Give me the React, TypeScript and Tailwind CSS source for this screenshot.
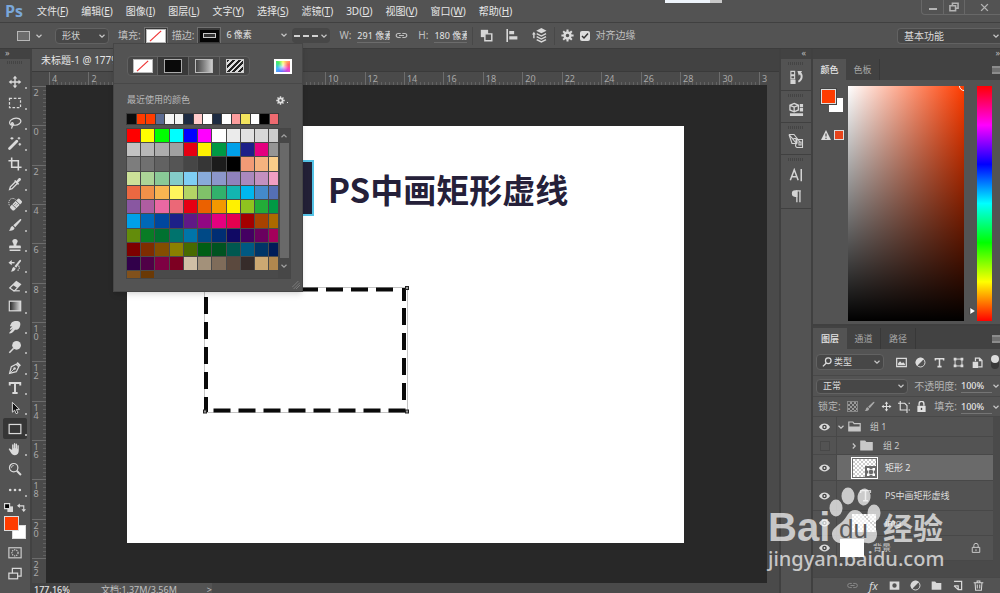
import { ReactNode } from "react";

const menus: [string, string][] = [
  ["文件", "F"],
  ["编辑", "E"],
  ["图像", "I"],
  ["图层", "L"],
  ["文字", "Y"],
  ["选择", "S"],
  ["滤镜", "T"],
  ["3D", "D"],
  ["视图", "V"],
  ["窗口", "W"],
  ["帮助", "H"],
];

const recentColors = [
  "#0c0c0c", "#ff3c00", "#ff3c00", "#5c6b92", "#f4f4f4", "#f2f2f2", "#1d2b42", "#ffcbcb",
  "#ffffff", "#1d2b42", "#ffffff", "#fb9c9c", "#f3e45d", "#ffffff", "#000000", "#ee6a70",
];

const swatches = [
  "#ff0000", "#ffff00", "#00ff00", "#00ffff", "#0000ff", "#ff00ff", "#ffffff", "#ebebeb", "#e1e1e1", "#d7d7d7", "#cccccc",
  "#c2c2c2", "#b7b7b7", "#acacac", "#a0a0a0", "#e60012", "#fff100", "#009944", "#00a0e9", "#1d2088", "#e4007f", "#959595",
  "#7d7d7d", "#707070", "#626262", "#555555", "#464646", "#363636", "#1c1c1c", "#000000", "#f29b76", "#f6b37f", "#facd89",
  "#cce198", "#acd598", "#89c997", "#84ccc9", "#7ecef4", "#88abda", "#8c97cb", "#8f82bc", "#aa89bd", "#c490bf", "#f19ec2",
  "#eb6841", "#f19149", "#f8b551", "#fff45c", "#b3d465", "#80c269", "#32b16c", "#13b5b1", "#00b7ee", "#448aca", "#556fb5",
  "#8957a1", "#ae5da1", "#ea68a2", "#eb6877", "#e60012", "#eb6100", "#f39800", "#fff100", "#8fc31f", "#22ac38", "#009944",
  "#00a0e9", "#0068b7", "#00479d", "#1d2088", "#601986", "#920783", "#e4007f", "#e5004f", "#a40000", "#a84200", "#ac6a00",
  "#638c0b", "#097c25", "#007130", "#00736d", "#0075a9", "#004986", "#002e73", "#100964", "#440062", "#6a005f", "#a4005b",
  "#7d0000", "#7f2d00", "#834e00", "#8a8000", "#486a00", "#005e15", "#005321", "#005850", "#005982", "#003567", "#001c58",
  "#31004a", "#500047", "#7e0043", "#7d0022", "#d0bfa5", "#a3917a", "#7f6c5a", "#5b493e", "#362c2a", "#cca872", "#b1874e",
  "#81511c", "#6a3906",
];

const topMarks = [4, 2, 0, 2, 4, 6, 8, 10, 12, 14, 16, 18, 20, 22, 24, 26, 28, 30];
const sideMarks = ["2", "0", "2", "4", "6", "8", "10", "12", "14", "16", "18", "20"];

function Icon({ children, size = "size-4", label }: { children: ReactNode; size?: string; label?: string }) {
  return (
    <svg
      viewBox="0 0 16 16"
      className={`${size} shrink-0`}
      fill="none"
      stroke="currentColor"
      strokeWidth="1.4"
      aria-label={label}
      aria-hidden={label ? undefined : true}
    >
      {children}
    </svg>
  );
}

function Chevron() {
  return (
    <svg viewBox="0 0 8 8" className="size-2 shrink-0 pointer-events-none" fill="none" stroke="#c8c8c8" strokeWidth="1.2" aria-hidden>
      <path d="M1.5 2.8 4 5.2 6.5 2.8" />
    </svg>
  );
}

function Burger() {
  return <span className="h-2 w-3 shrink-0 border-y-2 border-[#8c8c8c] bg-[#707070]" />;
}

function Grip() {
  return <span className="h-[3px] w-4 bg-[repeating-linear-gradient(90deg,#444_0_1px,transparent_1px_2px)]" />;
}

const solid = { fill: "currentColor", stroke: "none" };

const tools: { name: string; icon: ReactNode; active?: boolean; single?: boolean }[] = [
  {
    name: "移动工具",
    icon: (
      <>
        <path d="M8 3v10M3 8h10" strokeWidth="1.6" />
        <path {...solid} d="M8 .8 10.6 4H5.4zM8 15.2 5.4 12h5.2zM.8 8 4 5.4v5.2zM15.2 8 12 10.6V5.4z" />
      </>
    ),
  },
  { name: "矩形选框工具", icon: <rect x="1.7" y="2.7" width="12.6" height="10.6" strokeDasharray="3 1.9" /> },
  {
    name: "套索工具",
    icon: (
      <path d="M4.5 10.8C1.5 10 .8 6.8 3.6 4.4 6.5 2 12.5 1.5 14.3 4.5c1.7 3.2-2.8 6.5-7.3 6-2-.2-3.5-1.7-2.8-2.7.9-1.1 2.6 1 1.6 2.9-.6 1.3-1.9 1.3-1.5 3.8" />
    ),
  },
  {
    name: "魔棒工具",
    icon: (
      <>
        <path d="M1.8 14.2 10 6" strokeWidth="3.2" strokeLinecap="round" />
        <path d="M4.5 1v3.4M2.8 2.7h3.4M12.5 1v3M11 2.5h3M13.5 8v3M12 9.5h3" strokeWidth="1.2" />
      </>
    ),
  },
  { name: "裁剪工具", icon: <path d="M4.2.5v11.3h11.3M.5 4.2h11.3v11.3" strokeWidth="1.8" /> },
  {
    name: "吸管工具",
    icon: (
      <>
        <path d="M8.5 5.5 2.7 11.3 1.8 14.2l2.9-.9 5.8-5.8" strokeWidth="1.5" />
        <path {...solid} d="m7 4.5 1.2-1.2 1.5 1.2L12 1.7C13.6 0 16 2.4 14.3 4l-2.8 2.3 1.2 1.5L11.5 9z" />
      </>
    ),
  },
  {
    name: "污点修复画笔工具",
    icon: (
      <>
        <g transform="rotate(-45 9 8.5)">
          <rect {...solid} x="1.5" y="5.5" width="15" height="6.4" rx="2" />
          <path d="M6 5v7.500M12 5v7.500" stroke="#535353" strokeWidth=".9" />
          <path d="M7.300 7.500h3.500M7.300 9.700h3.500" stroke="#535353" strokeWidth=".9" strokeDasharray="1 1" />
        </g>
        <path d="M1.500 9.500C.2 6 1.200 2.300 4.500 1.700c1.800-.3 3 .3 4 1.200" strokeWidth="1" strokeDasharray="1.500 1" />
      </>
    ),
  },
  {
    name: "画笔工具",
    icon: (
      <path {...solid} d="M14.8 1.2c.9.7.2 1.5-.3 2.2L8.3 10.5 6 8.3l7-6.4c.6-.6 1.1-1.2 1.8-.7zM5.2 9l2.3 2.3C7 14 4 15 1 14.2c1.6-.7 1.5-1.8 1.9-3C3.3 10 4 9.2 5.2 9z" />
    ),
  },
  {
    name: "仿制图章工具",
    icon: (
      <path {...solid} d="M8 1c1.9 0 3.1 1.3 3.1 2.8C11.1 5.2 9.5 6 9.5 8.5h4c.8 0 1.2.5 1.2 1.2v2.1H1.3V9.7c0-.7.5-1.2 1.2-1.2h4C6.5 6 4.9 5.2 4.9 3.8 4.9 2.3 6.1 1 8 1zM1.8 13h12.4v1.8H1.8z" />
    ),
  },
  {
    name: "历史记录画笔工具",
    icon: (
      <>
        <path {...solid} d="M14.5 1c.9.6.3 1.5-.2 2.2l-4.9 6.8-2-1.7 5.4-6.5c.5-.6 1-1.3 1.7-.8zM6.7 9l2 1.7C8.5 13.5 6 14.8 3 14.2c1.3-.8 1.3-1.7 1.7-2.8.3-1.2 1-2.2 2-2.4zM.5 4.2 4.3 1v6z" />
        <path d="M3.5 4.2h4" strokeWidth="1.6" />
        <path d="M12 7.5c1.8 2 .8 4.5-1.5 6" strokeDasharray="1.5 1" />
      </>
    ),
  },
  {
    name: "橡皮擦工具",
    icon: (
      <>
        <path d="M6.5 13.3 2 10.3 9.5 3l4.8 3.2-6.7 7.1z" />
        <path {...solid} d="M5.5 6.8 10.4 10l3.9-3.8L9.5 3z" />
        <path d="M6 13.5h7.5" />
      </>
    ),
  },
  {
    name: "渐变工具",
    icon: (
      <>
        <defs>
          <linearGradient id="toolGrad">
            <stop stopColor="#222" />
            <stop offset="1" stopColor="#ddd" />
          </linearGradient>
        </defs>
        <rect x="1.5" y="2.5" width="13" height="11" fill="url(#toolGrad)" />
      </>
    ),
  },
  {
    name: "涂抹工具",
    icon: (
      <path {...solid} d="M4 3c1.5-2 7.5-2.5 9.3-.8 1.2 1.3 1 4 0 6C12 10.7 10 11.5 8 11c-1 1.5-3 3.7-5.8 4.3-.8.1-1-.6-.5-1.1L6 9.2 3.3 11c-.9.4-1.5-.5-.9-1.2L5 7 3.2 7.5c-1 0-1.2-1-.5-1.7z" />
    ),
  },
  {
    name: "减淡工具",
    icon: (
      <>
        <circle {...solid} cx="9.8" cy="6" r="5" />
        <path d="M6.5 9.5 1.5 14.6" strokeWidth="1.8" />
      </>
    ),
  },
  {
    name: "钢笔工具",
    icon: (
      <>
        <path d="m1.8 14.2 2-7.7L9.3 3.7l3 3-2.8 5.5z" />
        <path d="M1.8 14.2 7 9" strokeWidth="1" />
        <circle {...solid} cx="7.5" cy="8.5" r="1.4" />
        <path {...solid} d="m9.5 2.8 1.6-1.6 3.7 3.7-1.6 1.6z" />
      </>
    ),
  },
  { name: "横排文字工具", icon: <path d="M2 5V2.3h12V5M8 2.3v11.4M5 13.8h6" strokeWidth="2.2" /> },
  {
    name: "路径选择工具",
    icon: <path d="M5 1.5v11.3l2.6-2.4 1.7 4.1 2-.9-1.7-4h3.6z" fill="#111" strokeWidth="1.1" />,
  },
  { name: "矩形工具", icon: <rect x="1.3" y="2.8" width="13.4" height="10.4" />, active: true },
  {
    name: "抓手工具",
    icon: (
      <path {...solid} d="M4.7 9V3.6c0-1.4 1.6-1.4 1.6 0V7h.4V2.2c0-1.5 1.7-1.5 1.7 0V7h.4V2.8c0-1.4 1.6-1.4 1.6 0V7.6h.4V4.5c0-1.3 1.5-1.3 1.5 0v5.2c0 3-1.3 5.3-4.3 5.3-2.4 0-3.6-1-4.6-2.8L1 8.7c-.5-1 .7-1.7 1.5-.9z" />
    ),
  },
  {
    name: "缩放工具",
    single: true,
    icon: (
      <>
        <circle cx="6.5" cy="6.5" r="4.8" />
        <path d="M4 6.5C4 5 5 4 6.5 4" strokeWidth="1" />
        <path d="m10 10 4.8 4.8" strokeWidth="2.2" />
      </>
    ),
  },
  {
    name: "编辑工具栏",
    icon: (
      <g {...solid}>
        <circle cx="2.5" cy="8" r="1.5" />
        <circle cx="8" cy="8" r="1.5" />
        <circle cx="13.5" cy="8" r="1.5" />
      </g>
    ),
  },
];

function GearIcon({ size }: { size: string }) {
  return (
    <Icon size={size}>
      <circle cx="8" cy="8" r="3.7" strokeWidth="3" />
      <path
        d="M8 .5v3M8 12.5v3M.5 8h3M12.5 8h3M2.7 2.7l2.1 2.1M11.2 11.2l2.1 2.1M13.3 2.7l-2.1 2.1M4.8 11.2l-2.1 2.1"
        strokeWidth="2.5"
      />
    </Icon>
  );
}

function FolderIcon({ open }: { open?: boolean }) {
  return (
    <Icon size="size-[13px]">
      <path d="M1 13.5v-11h5l1.5 2H15v9z" fill={open ? "none" : "currentColor"} />
      {open && <path {...solid} d="M1 8h14v5.5H1z" />}
    </Icon>
  );
}

function NoFill() {
  return (
    <svg viewBox="0 0 20 14" className="h-[14px] w-5 border border-[#bbb] bg-white" aria-hidden>
      <path d="M3 13 16 1" stroke="#e33" strokeWidth="1.4" />
    </svg>
  );
}

function MenuBar() {
  return (
    <header className="relative flex h-[23px] shrink-0 items-center border-b border-[#404040] bg-[#535353]">
      <span className="w-[30px] pl-[5px] font-[Open_Sans] text-[16px] leading-[22px] font-bold text-[#7aa7d9]">Ps</span>
      <nav className="ml-[7px] flex gap-[13px]">
        {menus.map(([name, key]) => (
          <button key={name} className="flex items-center text-[10px] whitespace-nowrap text-[#e6e6e6]">
            {name}(<u>{key}</u>)
          </button>
        ))}
      </nav>
      <div className="absolute top-0 left-[665px] flex h-[3px] w-[57px] justify-end bg-[#eef4fb]">
        <span className="w-3 bg-[#c8c8c8]" />
      </div>
      <div className="ml-auto flex h-[15px] self-start rounded-bl-sm border-b border-l border-[#686868] text-[#b4b4b4]">
        <button aria-label="最小化" className="flex w-[22px] items-center justify-center border-r border-[#686868] pt-1">
          <span className="h-[2px] w-2 bg-[#b4b4b4]" />
        </button>
        <button aria-label="还原" className="flex w-[21px] items-center justify-center border-r border-[#686868]">
          <Icon size="size-[10px]">
            <path d="M5.5 5V2h9v8h-3M1.5 6h9v8h-9z" strokeWidth="2.5" />
          </Icon>
        </button>
        <button aria-label="关闭" className="flex w-[35px] items-center justify-center pl-1">
          <Icon size="size-[9px]">
            <path d="m2 2 12 12M14 2 2 14" strokeWidth="2.5" />
          </Icon>
        </button>
      </div>
    </header>
  );
}

function FillPopover() {
  return (
    <div className="absolute top-[20px] left-[113px] z-20 w-[190px] border border-[#464646] bg-[#535353] pb-3 shadow-md">
      <div className="flex items-center justify-between border-b border-[#484848] px-[13px] pt-[12px] pb-[7px]">
        <div className="flex h-[20px] divide-x divide-[#616161] rounded-sm border border-[#616161] bg-[#474747]">
          <button aria-label="无颜色" className="flex w-[30px] items-center justify-center">
            <NoFill />
          </button>
          <button aria-label="纯色" className="flex w-[31px] items-center justify-center bg-[#383838]">
            <span className="h-[14px] w-[18px] border border-[#aaa] bg-[#0a0a0a]" />
          </button>
          <button aria-label="渐变" className="flex w-[31px] items-center justify-center">
            <span className="h-[14px] w-[18px] border border-[#bbb] bg-linear-to-r from-[#444] to-[#ccc]" />
          </button>
          <button aria-label="图案" className="flex w-[29px] items-center justify-center">
            <span className="h-[14px] w-[18px] border border-[#ccc] bg-[repeating-linear-gradient(135deg,#222_0_2px,#ddd_2px_4px)]" />
          </button>
        </div>
        <button
          aria-label="拾色器"
          className="mr-[-3px] h-[15px] w-[18px] border-2 border-white bg-[radial-gradient(circle,#fffc,transparent_60%),conic-gradient(#ff6,#f66_70deg,#e4c_120deg,#66f_190deg,#4bf_250deg,#4e6_310deg,#ff6)]"
        />
      </div>

      <div className="mt-[9px] flex items-center justify-between pr-[14px] pl-[13px] text-[#b8b8b8]">
        <h2 className="text-[9px] leading-[14px]">最近使用的颜色</h2>
        <button aria-label="设置" className="flex items-center text-[#e0e0e0]">
          <GearIcon size="size-[9px]" />
          <span className="mt-1 ml-0.5 size-px bg-[#ddd]" />
        </button>
      </div>

      <div className="mx-[12px] mt-[6px] flex h-[12px] w-[153px] gap-px border border-[#3c3c3c] bg-[#3c3c3c]">
        {recentColors.map((color, i) => (
          <button key={i} aria-label={color} className="flex-1" style={{ backgroundColor: color }} />
        ))}
      </div>

      <div className="mx-[12px] mt-[3px] flex h-[151px] w-[165px] border border-[#464646] bg-[#4a4a4a]">
        <div className="grid w-[151px] grid-cols-[repeat(10,3fr)_2fr] grid-rows-[repeat(10,2fr)_1fr] gap-px bg-[#4a4a4a]">
          {swatches.map((color, i) => (
            <button key={i} aria-label={color} style={{ backgroundColor: color }} />
          ))}
        </div>
        <div className="flex flex-1 flex-col items-center bg-[#474747] pb-1">
          <span className="flex h-[14px] rotate-180 items-center opacity-70">
            <Chevron />
          </span>
          <span className="w-[9px] flex-1 bg-[#696969]" />
          <span className="flex h-[16px] items-center opacity-70">
            <Chevron />
          </span>
        </div>
      </div>
      <svg viewBox="0 0 10 10" className="absolute right-0.5 bottom-0.5 size-2" stroke="#858585" aria-hidden>
        <path d="M0 8 8 0M2 10 10 2M5 10l5-5" />
      </svg>
    </div>
  );
}

function OptionsBar() {
  return (
    <div className="relative flex h-[26px] shrink-0 items-center border-b border-[#3c3c3c] bg-[#535353] text-[10px] whitespace-nowrap text-[#c0c0c0]">
      <button aria-label="工具预设" className="ml-[17px] flex items-center gap-[5px]">
        <span className="h-[10px] w-[13px] border border-[#b8b8b8] bg-[#6c6c6c]" />
        <Chevron />
      </button>
      <label className="ml-[12px] flex h-[16px] w-[54px] items-center rounded-sm border border-[#626262] bg-[#474747] pr-0.5 pl-[6px]">
        <select aria-label="工具模式" className="min-w-0 flex-1 appearance-none bg-transparent text-[9px] text-[#d4d4d4] outline-none">
          <option>形状</option>
        </select>
        <Chevron />
      </label>
      <span className="ml-[9px]">填充:</span>
      <button aria-label="填充颜色" className="ml-[3px] flex h-[17px] w-[24px] items-center justify-center border border-[#707070] bg-[#383838]">
        <NoFill />
      </button>
      <span className="ml-[4px]">描边:</span>
      <button aria-label="描边颜色" className="ml-[3px] flex h-[17px] w-[24px] items-center justify-center border border-[#707070] bg-[#383838]">
        <span className="flex h-[12px] w-[19px] items-center justify-center bg-[#050505]">
          <span className="h-[5px] w-[13px] border border-[#c8c8c8] bg-[#333]" />
        </span>
      </button>
      <label className="ml-[3px] flex h-[16px] w-[64px] items-center border-b border-[#6c6c6c]">
        <input aria-label="描边宽度" defaultValue="6 像素" className="min-w-0 flex-1 bg-transparent pl-0.5 text-[9px] text-[#e4e4e4] outline-none" />
        <Chevron />
      </label>
      <button aria-label="描边类型" className="ml-[4px] flex h-[15px] w-[38px] items-center justify-between rounded-sm bg-[#474747] pr-0.5 pl-0.5">
        <svg viewBox="0 0 24 4" className="h-1 w-6" aria-hidden>
          <path d="M0 2h24" stroke="#fff" strokeWidth="1.5" strokeDasharray="6 3" />
        </svg>
        <Chevron />
      </button>
      <label className="ml-[9px] flex items-center gap-[6px]">
        W:
        <input defaultValue="291 像素" className="w-[33px] border-b border-[#6c6c6c] bg-transparent text-[9px] leading-[13px] text-[#e4e4e4] outline-none" />
      </label>
      <span className="ml-[5px] flex">
        <Icon size="size-[13px]" label="链接">
          <path d="M7 5.5H4a2.5 2.5 0 0 0 0 5h3M9 5.5h3a2.5 2.5 0 0 1 0 5H9M5 8h6" />
        </Icon>
      </span>
      <label className="ml-[10px] flex items-center gap-[6px]">
        H:
        <input defaultValue="180 像素" className="w-[33px] border-b border-[#6c6c6c] bg-transparent text-[9px] leading-[13px] text-[#e4e4e4] outline-none" />
      </label>
      <div className="ml-[5px] flex h-[18px] items-center gap-[13px] border-x border-[#484848] px-[7px] text-[#d8d8d8]">
        <button aria-label="路径操作">
          <Icon size="size-[13px]">
            <path {...solid} d="M1 1h9v9H1z" />
            <path d="M6 6h8.5v8.5H6z" fill="#535353" strokeWidth="1.8" />
          </Icon>
        </button>
        <button aria-label="路径对齐方式">
          <Icon size="size-[13px]">
            <path d="M1.5 0v16" strokeWidth="2" />
            <path {...solid} d="M4 2.5h6v4H4zM4 9h10v4H4z" />
          </Icon>
        </button>
        <button aria-label="路径排列方式">
          <Icon size="size-[15px]">
            <path {...solid} d="M10 0l5.5 2.8L10 5.6 4.5 2.8zM0 7l2-3 2 3z" />
            <path d="M2 6v5M5 6l5 2.6L15 6M5 9.2l5 2.6 5-2.6M5 12.3l5 2.6 5-2.6" strokeWidth="1.5" />
          </Icon>
        </button>
      </div>
      <button aria-label="几何选项" className="ml-[6px] text-[#dcdcdc]">
        <GearIcon size="size-[13px]" />
      </button>
      <label className="ml-[6px] flex items-center gap-[5px]">
        <input type="checkbox" defaultChecked className="sr-only" />
        <span className="flex size-[10px] items-center justify-center rounded-xs bg-[#dcdcdc] text-[#333]">
          <Icon size="size-2">
            <path d="m2 8 4 4 8-9" strokeWidth="3" />
          </Icon>
        </span>
        对齐边缘
      </label>
      <label className="ml-auto flex h-[16px] w-[103px] items-center rounded-l-sm border border-r-0 border-[#626262] bg-[#474747] pl-[6px]">
        <select aria-label="工作区" className="min-w-0 flex-1 appearance-none bg-transparent text-[10px] leading-[14px] text-[#dcdcdc] outline-none">
          <option>基本功能</option>
        </select>
        <Chevron />
      </label>
      <FillPopover />
    </div>
  );
}

function Toolbar() {
  return (
    <aside className="flex w-[32px] shrink-0 flex-col items-center border-r-2 border-[#424242] bg-[#535353] text-[#dadada]">
      <div className="h-[10px] w-full shrink-0 bg-[#424242] pl-[5px] text-[9px] leading-[8px] text-[#bbb]">»</div>
      <div className="flex h-[13px] shrink-0 items-start pt-[2px]">
        <Grip />
      </div>
      <div className="grid h-[428px] shrink-0 auto-rows-fr">
        {tools.map((tool) => (
          <button
            key={tool.name}
            aria-label={tool.name}
            className={
              tool.active
                ? "relative flex w-[24px] items-center justify-center rounded-xs bg-[#363636]"
                : "relative flex w-[24px] items-center justify-center"
            }
          >
            <Icon size="size-[14px]">{tool.icon}</Icon>
            {!tool.single && <span className="absolute right-0 bottom-[3px] size-[2px] bg-[#aaa]" />}
          </button>
        ))}
      </div>
      <div className="mt-[3px] flex w-[22px] shrink-0 justify-between">
        <Icon size="size-[9px]">
          <path {...solid} d="M6 6h10v10H6z" />
          <path d="M1 1h9v9H1z" fill="#000" strokeWidth="2" />
        </Icon>
        <Icon size="size-[9px]">
          <path d="M3 5h9v7" strokeWidth="2" />
          <path {...solid} d="M0 5l5-4v8zM12 16l-4-5h8z" />
        </Icon>
      </div>
      <div className="relative mt-[4px] h-[23px] w-[22px] shrink-0">
        <span className="absolute right-0 bottom-0 size-[14px] border border-[#ddd] bg-white" />
        <button aria-label="前景色" className="absolute top-0 left-0 size-[15px] border border-[#ddd] bg-[#ff3c00]" />
      </div>
      <button aria-label="快速蒙版" className="mt-[7px] text-[#c8c8c8]">
        <Icon size="size-[14px]">
          <rect x="1" y="2" width="14" height="11.5" />
          <circle cx="8" cy="7.8" r="3.5" strokeDasharray="1.5 1" />
        </Icon>
      </button>
      <button aria-label="屏幕模式" className="mt-[7px]">
        <Icon size="size-[14px]">
          <path d="M5 7V1.5h10v9h-4" />
          <rect x="1" y="7" width="10" height="6.5" />
        </Icon>
      </button>
    </aside>
  );
}

function Artboard() {
  return (
    <div className="relative h-[417px] w-[557px] shrink-0 bg-white">
      <div className="absolute top-[34px] left-[120px] h-[56px] w-[67px] border-2 border-[#55c3e6] bg-[#232036]" />
      <h1 className="absolute top-[38px] left-[201px] font-['Noto_Sans_CJK_SC'] text-[33px] leading-[50px] font-bold whitespace-nowrap text-[#252039]">
        PS中画矩形虚线
      </h1>
      <svg viewBox="0 0 206 128" className="absolute top-[160px] left-[76px] h-[128px] w-[206px]" fill="none" aria-label="矩形 2">
        <rect x="1.5" y="1.5" width="203" height="125" stroke="#c4c4c4" />
        <path
          d="M23 3.5h168M201 2v13M201 22v94M3 11v93M3 111v15M10.5 124.5h193"
          stroke="#0a0a0a"
          strokeWidth="4"
          strokeDasharray="17 8"
        />
        <g fill="#999" stroke="#222">
          <rect x="202.5" y=".5" width="3" height="3" />
          <rect x="202.5" y="124" width="3" height="3" />
          <rect x=".5" y="124" width="3" height="3" />
        </g>
      </svg>
    </div>
  );
}

function DocumentArea() {
  return (
    <main className="flex min-w-0 flex-1 flex-col bg-[#424242]">
      <div className="flex h-[23px] shrink-0 border-b border-[#3a3a3a]">
        <button className="w-[120px] overflow-hidden bg-[#535353] pl-[9px] text-left text-[10px] whitespace-nowrap text-[#e6e6e6]">
          未标题-1 @ 177%
        </button>
      </div>
      <div className="flex min-h-0 flex-1">
        <div className="flex min-w-0 flex-1 flex-col">
          <div className="flex h-[13px] shrink-0 bg-[#4a4a4a] pl-[17px] text-[9px] leading-[13px] text-[#a8a8a8]">
            {topMarks.map((mark, i) => (
              <div key={i} className="relative min-w-0 flex-1 border-l border-[#6c6c6c] pl-0.5">
                {mark}
                <span className="absolute bottom-0 left-0 h-[3px] w-full bg-[repeating-linear-gradient(90deg,transparent_0_3px,#626262_3px_4px)]" />
              </div>
            ))}
            <div className="w-[8px] overflow-hidden border-l border-[#6c6c6c] pl-0.5">32</div>
          </div>
          <div className="flex min-h-0 flex-1">
            <div className="flex w-[14px] shrink-0 flex-col overflow-hidden bg-[#4a4a4a] pt-px text-[9px] leading-[8px] text-[#a8a8a8]">
              {sideMarks.map((mark, i) => (
                <div key={i} className="relative min-h-0 flex-1 border-t border-[#6c6c6c] pt-[2px]">
                  <span className="block w-[8px] text-center break-all">{mark}</span>
                  <span className="absolute top-0 right-0 h-full w-[3px] bg-[repeating-linear-gradient(180deg,transparent_0_3px,#626262_3px_4px)]" />
                </div>
              ))}
              <div className="h-[25px] border-t border-[#6c6c6c] pt-[2px]">
                <span className="block w-[8px] text-center break-all">22</span>
              </div>
            </div>
            <div className="flex min-w-0 flex-1 items-center justify-center overflow-hidden bg-[#282828] pr-0.5">
              <Artboard />
            </div>
          </div>
        </div>
        <div className="w-[12px] shrink-0 bg-[#4a4a4a]" />
      </div>
      <footer className="flex h-[10px] shrink-0 overflow-hidden bg-[#4a4a4a] text-[9px] leading-[13px] text-[#c0c0c0]">
        <span className="w-[38px] bg-[#424242] pl-0.5 font-medium text-[#e4e4e4]">177.16%</span>
        <span className="flex w-[142px] justify-between bg-[#535353] pl-[31px]">
          文档:1.37M/3.56M <span>&gt;</span>
        </span>
      </footer>
    </main>
  );
}

function IconDock() {
  return (
    <aside className="flex w-[34px] shrink-0 flex-col border-x-2 border-[#404040] bg-[#535353] text-[#d4d4d4]">
      <div className="h-[10px] bg-[#424242] pr-[5px] text-right text-[9px] leading-[8px] text-[#bbb]">«</div>
      <div className="flex h-[32px] flex-col items-center gap-[5px] border-b border-[#404040] pt-[3px]">
        <Grip />
        <button aria-label="历史记录">
          <Icon size="size-[15px]">
            <path d="M2 1.5h4V5H2zM2 6h4v3.5H2z" strokeWidth="1.2" />
            <path {...solid} d="M1.5 10.5H7V15H1.5zM9 1h5L10.5 6z" />
            <path d="M11 2.500c4 2.500 3 8-1 10" strokeWidth="2" />
          </Icon>
        </button>
      </div>
      <div className="flex h-[32px] flex-col items-center gap-[5px] border-b border-[#404040] pt-[3px]">
        <Grip />
        <button aria-label="属性">
          <Icon size="size-[15px]">
            <path d="M5.5 1.5 10 3.5v5l-4.5 2-4.5-2v-5zM1 3.5l4.5 2 4.5-2M5.5 5.5v5" />
            <path {...solid} d="M11.5 2H15v3.5h-3.5zM11.5 6.5H15V10h-3.5zM1 12h14v3H1z" />
          </Icon>
        </button>
      </div>
      <div className="flex h-[32px] flex-col items-center gap-[4px] border-b border-[#404040] pt-[3px]">
        <Grip />
        <button aria-label="画笔">
          <Icon size="size-4">
            <path d="M1 1.5h5l6 7.5M1 1.5l3 9h4V5L5 6zM1 1.5 8 10M9 6.500h5.500v8H9c-2-1-2-3 0-4.500zM11 9h2v3h-2z" strokeWidth="1.1" />
          </Icon>
        </button>
      </div>
      <div className="flex h-[54px] flex-col items-center gap-[7px] border-b border-[#404040] pt-[3px]">
        <Grip />
        <button aria-label="字符" className="h-[14px]">
          <Icon size="size-[14px]">
            <path d="M1.5 14 6 2l4.5 12M3 10h6M14 1v14" strokeWidth="1.7" />
          </Icon>
        </button>
        <button aria-label="段落">
          <Icon size="size-[14px]">
            <path {...solid} d="M8 1.5h1.5V9H7A3.7 3.7 0 0 1 7 1.5z" />
            <path d="M9 2v13M12.5 2v13M8 2.2h5.5" strokeWidth="1.5" />
          </Icon>
        </button>
      </div>
    </aside>
  );
}

function ColorPanel() {
  return (
    <section className="flex h-[267px] shrink-0 flex-col border-b-2 border-[#404040]">
      <div className="flex h-[21px] shrink-0 bg-[#424242] text-[9px]">
        <button className="w-[33px] bg-[#535353] font-medium text-[#e6e6e6]">颜色</button>
        <button className="w-[34px] border-r border-[#383838] text-[#a8a8a8]">色板</button>
        <span className="ml-auto flex w-2 items-center overflow-hidden">
          <Burger />
        </span>
      </div>
      <div className="flex min-h-0 flex-1 pt-[6px] pb-[3px]">
        <div className="w-[35px] shrink-0 pt-[3px] pl-[8px]">
          <div className="relative h-[23px] w-[22px]">
            <span className="absolute right-0 bottom-0 size-[14px] bg-white" />
            <button aria-label="前景色" className="absolute top-0 left-0 size-[15px] border border-[#ddd] bg-[#ff3c00] outline outline-[#444]" />
          </div>
          <div className="mt-[18px] flex items-center gap-[3px]">
            <svg viewBox="0 0 10 10" className="size-[10px] shrink-0" aria-label="溢色警告">
              <path d="M5 0 10 10H0z" fill="#ddd" />
              <path d="M5 3.5v3M5 7.7v1.3" stroke="#333" />
            </svg>
            <span className="size-[10px] shrink-0 border border-[#ddd] bg-[#e8441a]" />
          </div>
        </div>
        <div className="relative min-w-0 flex-1 overflow-hidden bg-[linear-gradient(to_top,#000,transparent),linear-gradient(to_right,#fff,#ff3c00)]">
          <span className="absolute top-[-5px] right-[-5px] size-[10px] rounded-full border border-white" />
        </div>
        <div className="flex w-[13px] shrink-0 items-end justify-end pb-[6px]">
          <svg viewBox="0 0 8 8" className="size-2" aria-hidden>
            <path d="M1 .5 6.500 4 1 7.500z" fill="#fff" stroke="#222" strokeWidth=".5" />
          </svg>
        </div>
        <div className="mr-[8px] w-[15px] shrink-0 bg-[linear-gradient(to_bottom,#f00,#f0f,#00f,#0ff,#0f0,#ff0,#f00)]" />
      </div>
    </section>
  );
}

function Eye() {
  return (
    <svg viewBox="0 0 12 8" className="h-[8px] w-[11px]" aria-label="可见">
      <path d="M0 4c3-5 9-5 12 0-3 5-9 5-12 0z" fill="#dcdcdc" />
      <circle cx="6" cy="4" r="2.5" fill="#444" />
      <circle cx="6" cy="4" r="1" fill="#ddd" />
    </svg>
  );
}

function LayerRow({ height, active, hidden, children }: { height: string; active?: boolean; hidden?: boolean; children: ReactNode }) {
  return (
    <li className={`${height} flex border-b border-[#484848]`}>
      <button aria-label="切换可见性" className="flex w-[24px] shrink-0 items-center justify-center border-r border-[#484848]">
        {hidden ? <span className="size-[10px] border border-[#484848]" /> : <Eye />}
      </button>
      <div className={active ? "flex flex-1 items-center bg-[#6a6a6a]" : "flex flex-1 items-center"}>{children}</div>
    </li>
  );
}

const checker = "bg-[conic-gradient(#ccc_25%,#fff_0_50%,#ccc_0_75%,#fff_0)] bg-size-[4px_4px]";

function LayersPanel() {
  return (
    <section className="flex min-h-0 flex-1 flex-col text-[9px] text-[#c8c8c8]">
      <div className="flex h-[23px] shrink-0 bg-[#424242] pt-0.5">
        <button className="w-[34px] bg-[#535353] font-medium text-[#e6e6e6]">图层</button>
        <button className="w-[34px] border-r border-[#383838] text-[#a8a8a8]">通道</button>
        <button className="w-[35px] border-r border-[#383838] text-[#a8a8a8]">路径</button>
        <span className="ml-auto flex w-2 items-center overflow-hidden">
          <Burger />
        </span>
      </div>

      <div className="flex h-[27px] shrink-0 items-center overflow-hidden border-b border-[#484848] pl-[3px] text-[#dcdcdc]">
        <label className="flex h-[16px] w-[68px] shrink-0 items-center rounded-sm border border-[#626262] bg-[#474747] pr-0.5 pl-[5px]">
          <Icon size="size-[10px]">
            <circle cx="10" cy="6" r="4.5" strokeWidth="2" />
            <path d="m7 9.5-5.5 5.5" strokeWidth="2.2" />
          </Icon>
          <select aria-label="滤镜类型" className="ml-0.5 min-w-0 flex-1 appearance-none bg-transparent text-[9px] outline-none">
            <option>类型</option>
          </select>
          <Chevron />
        </label>
        <div className="ml-[12px] flex shrink-0 items-center gap-[8px]">
          <Icon size="size-[11px]">
            <rect x="1" y="2" width="14" height="12" strokeWidth="1.8" />
            <path {...solid} d="M3 12V9l3-3 2.5 3 2-1.5L13 10v2z" />
          </Icon>
          <Icon size="size-[11px]">
            <circle cx="8" cy="8" r="6.5" />
            <path {...solid} d="M13 3A7 7 0 0 0 3 13z" />
          </Icon>
          <Icon size="size-[11px]">
            <path d="M2 5V2.5h12V5M8 2.5v11M5 14h6" strokeWidth="2.2" />
          </Icon>
          <Icon size="size-[11px]">
            <path d="M3 3h10v10H3z" />
            <path {...solid} d="M1 1h4v4H1zM11 1h4v4h-4zM1 11h4v4H1zM11 11h4v4h-4z" />
          </Icon>
          <Icon size="size-[11px]">
            <path d="M5 6V1.5h6L14.5 5v9.5H9" strokeWidth="1.8" />
            <path {...solid} d="M1 7h8v9H1zM10 1l5 5h-5z" />
          </Icon>
          <span className="h-[14px] w-[8px] shrink-0 rounded-full bg-[#3a3a3a]">
            <span className="block size-2 rounded-full bg-[#ddd]" />
          </span>
        </div>
      </div>

      <div className="flex h-[21px] shrink-0 items-center border-b border-[#484848] pl-[3px]">
        <label className="flex h-[15px] w-[92px] items-center rounded-sm border border-[#626262] bg-[#474747] pr-0.5 pl-[6px] text-[#dcdcdc]">
          <select aria-label="混合模式" className="min-w-0 flex-1 appearance-none bg-transparent text-[9px] outline-none">
            <option>正常</option>
          </select>
          <Chevron />
        </label>
        <label className="ml-auto flex items-center gap-[4px] text-[10px] whitespace-nowrap text-[#b4b4b4]">
          不透明度:
          <input defaultValue="100%" className="w-[31px] border-b border-[#757575] bg-transparent text-[9px] leading-[13px] font-medium text-[#e6e6e6] outline-none" />
        </label>
        <Chevron />
      </div>

      <div className="flex h-[20px] shrink-0 items-center border-b border-[#484848] pl-[5px] text-[10px] text-[#b4b4b4]">
        锁定:
        <div className="ml-[6px] flex gap-[6px] text-[#e0e0e0]">
          <span className="size-[11px] border border-[#888] bg-[conic-gradient(#999_25%,#535353_0_50%,#999_0_75%,#535353_0)] bg-size-[4px_4px]" />
          <span className="text-[#aaa]">
            <Icon size="size-[11px]">{tools[7].icon}</Icon>
          </span>
          <Icon size="size-[11px]">{tools[0].icon}</Icon>
          <Icon size="size-[12px]">
            <path d="M3 0v12h9M0 3h9l3 3v10M14 3h2M14 12h2" strokeWidth="1.5" />
          </Icon>
          <Icon size="size-[11px]">
            <path {...solid} d="M2 7h12v9H2z" />
            <path d="M4.5 7V4a3.5 3.5 0 0 1 7 0v3" strokeWidth="2" />
            <path d="M8 10v3" stroke="#444" strokeWidth="2" />
          </Icon>
        </div>
        <label className="ml-auto flex items-center gap-[4px] whitespace-nowrap">
          填充:
          <input defaultValue="100%" className="w-[31px] border-b border-[#757575] bg-transparent text-[9px] leading-[13px] font-medium text-[#e6e6e6] outline-none" />
        </label>
        <Chevron />
      </div>

      <div className="flex min-h-0 flex-1 bg-[#4a4a4a] pr-[7px]">
        <ul className="h-[144px] min-w-0 flex-1 bg-[#535353]">
          <LayerRow height="h-[20px]">
            <span className="mr-[3px] flex">
              <Chevron />
            </span>
            <FolderIcon open />
            <span className="ml-[9px]">组 1</span>
          </LayerRow>
          <LayerRow height="h-[18px]" hidden>
            <span className="mr-[2px] ml-[13px] flex -rotate-90">
              <Chevron />
            </span>
            <FolderIcon />
            <span className="ml-[10px]">组 2</span>
          </LayerRow>
          <LayerRow height="h-[26px]" active>
            <span className="relative ml-[14px] flex h-[22px] w-[27px] items-center justify-center border border-white">
              <span className={`h-[18px] w-[23px] ${checker}`} />
              <span className="absolute right-0 bottom-0 bg-[#6a6a6a] p-0.5 text-white">
                <Icon size="size-[8px]">
                  <path d="M3 3h10v10H3z" />
                  <path {...solid} d="M0 0h5v5H0zM11 0h5v5h-5zM0 11h5v5H0zM11 11h5v5h-5z" />
                </Icon>
              </span>
            </span>
            <span className="ml-[7px] text-[#e6e6e6]">矩形 2</span>
          </LayerRow>
          <LayerRow height="h-[30px]">
            <span className="flex w-[48px] shrink-0 justify-center pl-[8px]">
              <Icon size="size-[13px]">
                <path d="M2 5V2h12v3M8 2v12M5 14.5h6" strokeWidth="1.8" />
              </Icon>
            </span>
            <span className="text-[#dcdcdc]">PS中画矩形虚线</span>
          </LayerRow>
          <LayerRow height="h-[25px]">
            <span className={`ml-[15px] h-[18px] w-[24px] ${checker}`} />
            <span className="ml-[9px]">img</span>
          </LayerRow>
          <LayerRow height="h-[25px]">
            <span className="ml-[3px] h-[18px] w-[24px] bg-white" />
            <span className="ml-[9px]">背景</span>
            <span className="mr-[12px] ml-auto">
              <Icon size="size-[10px]">
                <path d="M2 7h12v8H2zM4.5 7V4a3.5 3.5 0 0 1 7 0v3M8 10v3" strokeWidth="1.6" />
              </Icon>
            </span>
          </LayerRow>
        </ul>
      </div>

      <footer className="flex h-[16px] shrink-0 items-center justify-end gap-[10px] border-t border-[#484848] pr-[16px] text-[#d8d8d8]">
        <span className="text-[#8a8a8a]">
          <Icon size="size-[11px]">
            <path d="M7 5H4a3 3 0 0 0 0 6h3M9 5h3a3 3 0 0 1 0 6H9M5 8h6" />
          </Icon>
        </span>
        <button aria-label="图层样式" className="w-[11px] text-[11px] leading-[12px] italic">
          fx
        </button>
        <Icon size="size-[11px]">
          <path {...solid} fillRule="evenodd" d="M1 2h14v12H1zM8 4.8a3.2 3.2 0 1 0 0 6.4 3.2 3.2 0 0 0 0-6.4z" />
        </Icon>
        <Icon size="size-[11px]">
          <circle cx="8" cy="8" r="6.5" />
          <path {...solid} d="M13 3A7 7 0 0 0 3 13z" />
        </Icon>
        <Icon size="size-[11px]">
          <path {...solid} d="M1 14V2h5l2 2.5h7V14z" />
        </Icon>
        <Icon size="size-[11px]">
          <path d="M3 2h11v12H9L3 8.5M3 8.5h6V14" strokeWidth="1.8" />
        </Icon>
        <Icon size="size-[11px]">
          <path d="M1 4h14M6 4V1.5h4V4M3 4l.8 11h8.4L13 4M6.2 6.5v6M9.8 6.5v6" strokeWidth="1.5" />
        </Icon>
      </footer>
    </section>
  );
}

function Watermark() {
  return (
    <div className="pointer-events-none absolute right-[54px] bottom-[20px] z-30 w-[178px] text-white/70">
      <div className="flex h-[56px] items-end">
        <span className="w-[62px] font-[Liberation_Sans] text-[40px] leading-[36px] font-bold">Bai</span>
        <span className="relative h-[56px] w-[52px] shrink-0">
          <svg viewBox="0 0 52 56" className="absolute inset-0 overflow-visible" fill="currentColor" aria-hidden>
            <ellipse cx="6" cy="19" rx="6.5" ry="8.5" />
            <ellipse cx="18" cy="7" rx="6.5" ry="8.5" />
            <ellipse cx="34" cy="8" rx="6.5" ry="8.5" transform="rotate(8 34 8)" />
            <ellipse cx="44" cy="24" rx="6.5" ry="8.5" />
            <path d="M25 21c7 0 9 8 14 12s8 7 8 12c0 7-5 10-10 9-8-1.5-16-1.5-24 0C7 55 2 51 2 45c0-5 5-8 10-12C17 29 18 21 25 21z" />
          </svg>
          <span className="absolute bottom-0 left-[9px] font-[Liberation_Sans] text-[26px] leading-[32px] text-[#5c5c5c]">du</span>
        </span>
        <span className="ml-px text-[30px] leading-[34px] font-bold">经验</span>
      </div>
      <p className="font-[Noto_Sans] text-[20px] leading-[28px] font-medium whitespace-nowrap">jingyan.baidu.com</p>
    </div>
  );
}

export default function App() {
  return (
    <div className="relative flex h-screen flex-col overflow-hidden bg-[#535353] font-['Noto_Sans','Noto_Sans_CJK_SC',sans-serif]">
      <MenuBar />
      <OptionsBar />
      <div className="flex min-h-0 flex-1">
        <Toolbar />
        <DocumentArea />
        <IconDock />
        <div className="flex w-[187px] shrink-0 flex-col bg-[#535353]">
          <div className="h-[10px] shrink-0 overflow-hidden bg-[#424242] text-right text-[9px] leading-[8px] text-[#bbb]">»</div>
          <ColorPanel />
          <LayersPanel />
        </div>
      </div>
      <Watermark />
    </div>
  );
}
